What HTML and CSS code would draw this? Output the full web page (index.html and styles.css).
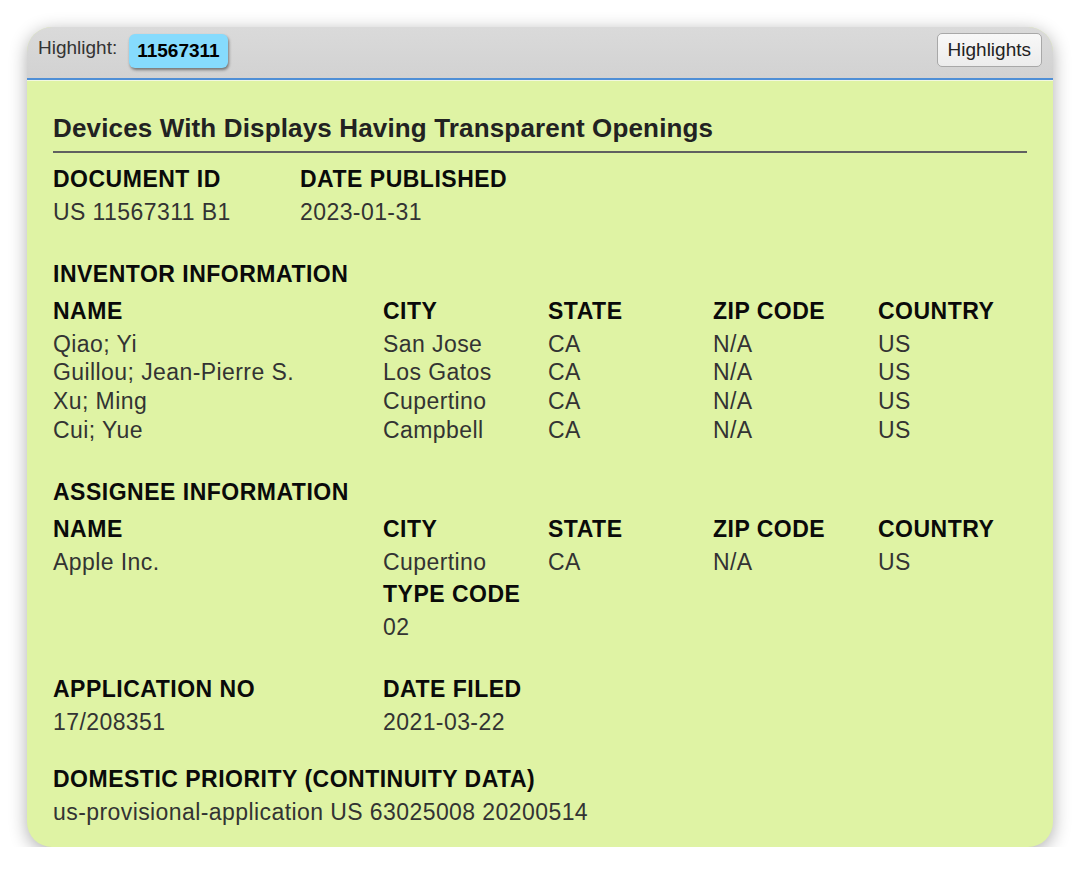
FILE: index.html
```html
<!DOCTYPE html>
<html>
<head>
<meta charset="utf-8">
<link rel="stylesheet" href="styles.css">
</head>
<body>
<div class="card">
  <div class="topbar">
    <div class="hl">
      <span class="hl-label">Highlight:</span>
      <span class="badge">11567311</span>
    </div>
    <button class="btn">Highlights</button>
  </div>
  <div class="content">
    <h1 class="title">Devices With Displays Having Transparent Openings</h1>

    <div class="grid two">
      <div class="lbl">DOCUMENT ID</div>
      <div class="lbl">DATE PUBLISHED</div>
      <div class="val">US 11567311 B1</div>
      <div class="val">2023-01-31</div>
    </div>

    <div class="section">
      <div class="sec-title">INVENTOR INFORMATION</div>
      <div class="grid five">
        <div class="lbl">NAME</div>
        <div class="lbl">CITY</div>
        <div class="lbl">STATE</div>
        <div class="lbl">ZIP CODE</div>
        <div class="lbl">COUNTRY</div>
        <div class="val">Qiao; Yi</div><div class="val">San Jose</div><div class="val">CA</div><div class="val">N/A</div><div class="val">US</div>
        <div class="val">Guillou; Jean-Pierre S.</div><div class="val">Los Gatos</div><div class="val">CA</div><div class="val">N/A</div><div class="val">US</div>
        <div class="val">Xu; Ming</div><div class="val">Cupertino</div><div class="val">CA</div><div class="val">N/A</div><div class="val">US</div>
        <div class="val">Cui; Yue</div><div class="val">Campbell</div><div class="val">CA</div><div class="val">N/A</div><div class="val">US</div>
      </div>
    </div>

    <div class="section">
      <div class="sec-title">ASSIGNEE INFORMATION</div>
      <div class="grid five">
        <div class="lbl">NAME</div>
        <div class="lbl">CITY</div>
        <div class="lbl">STATE</div>
        <div class="lbl">ZIP CODE</div>
        <div class="lbl">COUNTRY</div>
        <div class="val">Apple Inc.</div><div class="val">Cupertino</div><div class="val">CA</div><div class="val">N/A</div><div class="val">US</div>
        <div class="lbl col2 sub">TYPE CODE</div>
        <div class="val col2">02</div>
      </div>
    </div>

    <div class="section app-sec">
      <div class="grid app">
        <div class="lbl">APPLICATION NO</div>
        <div class="lbl">DATE FILED</div>
        <div class="val">17/208351</div>
        <div class="val">2021-03-22</div>
      </div>
    </div>

    <div class="section sm">
      <div class="lbl">DOMESTIC PRIORITY (CONTINUITY DATA)</div>
      <div class="val">us-provisional-application US 63025008 20200514</div>
    </div>
  </div>
</div>
</body>
</html>
```

FILE: styles.css
```css
html, body {
  margin: 0;
  padding: 0;
  background: #ffffff;
}
body {
  font-family: "Liberation Sans", Arial, sans-serif;
  padding: 27px 27px 0 27px;
}
.card {
  width: 1026px;
  height: 820px;
  border-radius: 25px;
  overflow: hidden;
  background: #dff3a4;
  box-shadow: 0 4px 18px rgba(0, 0, 0, 0.32);
  display: flex;
  flex-direction: column;
}
.topbar {
  height: 53px;
  box-sizing: border-box;
  background: linear-gradient(#dadada, #d2d2d2);
  border-bottom: 2px solid #4f8fd6;
  box-shadow: 0 1px 0 #f2f8e0;
  display: flex;
  align-items: flex-start;
  justify-content: space-between;
  padding: 6px 11px 0 11px;
}
.hl {
  display: flex;
  align-items: flex-start;
  gap: 12px;
}
.hl-label {
  font-size: 19px;
  color: #333;
  line-height: 20px;
  padding-top: 5px;
}
.badge {
  display: inline-block;
  background: #86dbfd;
  border-radius: 6px;
  padding: 0 8px;
  height: 34px;
  line-height: 34px;
  font-size: 19px;
  font-weight: bold;
  color: #000;
  box-shadow: 1px 2px 3px rgba(0, 0, 0, 0.45);
  margin-top: 1px;
}
.btn {
  font-family: "Liberation Sans", Arial, sans-serif;
  font-size: 19px;
  color: #222;
  height: 34px;
  padding: 0 10px;
  background: linear-gradient(#f8f8f8, #ececec);
  border: 1px solid #a8a8a8;
  border-radius: 5px;
  margin: 0;
}
.content {
  padding: 32px 26px 0 26px;
}
.title {
  margin: 0;
  font-size: 26px;
  line-height: 32px;
  letter-spacing: 0.15px;
  font-weight: bold;
  color: #222;
  padding-bottom: 7px;
  border-bottom: 2px solid #606060;
  margin-bottom: 12px;
}
.grid {
  display: grid;
}
.two {
  grid-template-columns: 247px 1fr;
}
.five {
  grid-template-columns: 330px 165px 165px 165px 1fr;
}
.app {
  grid-template-columns: 330px 1fr;
}
.col2 {
  grid-column: 2;
}
.lbl, .sec-title {
  font-size: 23px;
  line-height: 29px;
  letter-spacing: 0.5px;
  font-weight: bold;
  color: #0a0a0a;
}
.lbl {
  margin-bottom: 4px;
}
.lbl.sub {
  margin-top: 4px;
}
.val {
  font-size: 23px;
  line-height: 28.7px;
  letter-spacing: 0.42px;
  color: #333;
}
.section {
  margin-top: 33px;
}
.section.app-sec {
  margin-top: 33px;
}
.section.sm {
  margin-top: 28px;
}
.sec-title {
  margin-bottom: 8px;
}
```
